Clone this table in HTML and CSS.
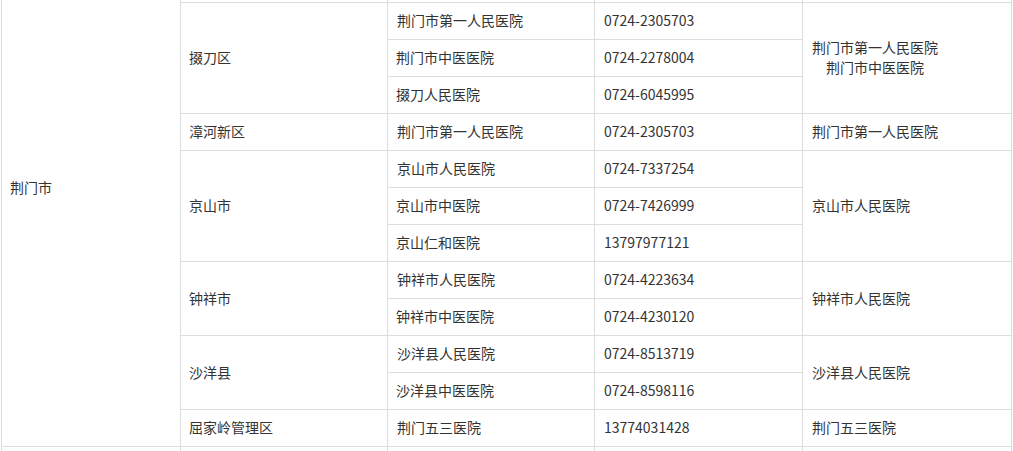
FILE: index.html
```html
<!DOCTYPE html>
<html lang="zh-CN">
<head>
<meta charset="utf-8">
<title>荆门市定点医院</title>
<link rel="stylesheet" href="styles.css">
</head>
<body>
<div class="page">
<table class="hosp">
<colgroup>
<col class="c1"><col class="c2"><col class="c3"><col class="c4"><col class="c5">
</colgroup>
<tbody>
<tr>
<td rowspan="14">荆门市</td>
<td rowspan="2">东宝区</td>
<td>荆门市第二人民医院</td>
<td>0724-2352620</td>
<td rowspan="2">荆门市第二人民医院</td>
</tr>
<tr>
<td>东宝区人民医院</td>
<td>0724-2213120</td>
</tr>
<tr>
<td rowspan="3">掇刀区</td>
<td>荆门市第一人民医院</td>
<td>0724-2305703</td>
<td rowspan="3"><span class="stack">荆门市第一人民医院<br>荆门市中医医院</span></td>
</tr>
<tr>
<td>荆门市中医医院</td>
<td>0724-2278004</td>
</tr>
<tr>
<td>掇刀人民医院</td>
<td>0724-6045995</td>
</tr>
<tr>
<td>漳河新区</td>
<td>荆门市第一人民医院</td>
<td>0724-2305703</td>
<td>荆门市第一人民医院</td>
</tr>
<tr>
<td rowspan="3">京山市</td>
<td>京山市人民医院</td>
<td>0724-7337254</td>
<td rowspan="3">京山市人民医院</td>
</tr>
<tr>
<td>京山市中医院</td>
<td>0724-7426999</td>
</tr>
<tr>
<td>京山仁和医院</td>
<td>13797977121</td>
</tr>
<tr>
<td rowspan="2">钟祥市</td>
<td>钟祥市人民医院</td>
<td>0724-4223634</td>
<td rowspan="2">钟祥市人民医院</td>
</tr>
<tr>
<td>钟祥市中医医院</td>
<td>0724-4230120</td>
</tr>
<tr>
<td rowspan="2">沙洋县</td>
<td>沙洋县人民医院</td>
<td>0724-8513719</td>
<td rowspan="2">沙洋县人民医院</td>
</tr>
<tr>
<td>沙洋县中医医院</td>
<td>0724-8598116</td>
</tr>
<tr>
<td>屈家岭管理区</td>
<td>荆门五三医院</td>
<td>13774031428</td>
<td>荆门五三医院</td>
</tr>
<tr>
<td>孝感市</td>
<td>孝南区</td>
<td>孝感市中心医院</td>
<td>0712-2880312</td>
<td>孝感市中心医院</td>
</tr>
</tbody>
</table>
</div>
</body>
</html>
```

FILE: styles.css
```css
html, body {
  margin: 0;
  padding: 0;
  background: #fff;
}
.page {
  margin: -72px 0 0 1px;
}
.hosp {
  border-collapse: collapse;
  table-layout: fixed;
  width: 1010px;
  font-family: "Noto Sans CJK SC", "Microsoft YaHei", sans-serif;
  font-size: 14px;
  color: #333;
}
.c1 { width: 179px; }
.c2 { width: 207px; }
.c3 { width: 207px; }
.c4 { width: 208px; }
.c5 { width: 209px; }
.hosp td {
  border: 1px solid #ddd;
  height: 37px;
  padding: 0 9px 2px 8px;
  line-height: 20px;
  vertical-align: middle;
  box-sizing: border-box;
  white-space: nowrap;
}
.hosp td:nth-child(n) + td {
  padding-left: 9px;
}
.stack {
  display: inline-block;
  text-align: center;
}
```
